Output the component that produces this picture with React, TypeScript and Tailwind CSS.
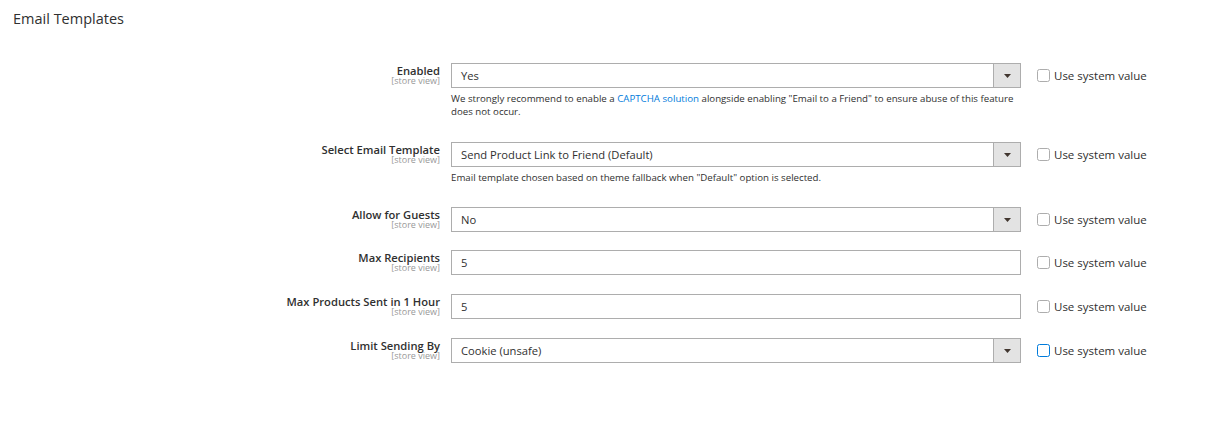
import React from "react";

type Row = {
  label: string;
  kind: "select" | "input";
  value: string;
  note?: React.ReactNode;
  focused?: boolean;
  pb: string;
};

const rows: Row[] = [
  {
    label: "Enabled",
    kind: "select",
    value: "Yes",
    pb: "pb-[20px]",
    note: (
      <>
        We strongly recommend to enable a{" "}
        <span className="text-[#007bdb]">CAPTCHA solution</span> alongside enabling
        "Email to a Friend" to ensure abuse of this feature does not occur.
      </>
    ),
  },
  {
    label: "Select Email Template",
    kind: "select",
    value: "Send Product Link to Friend (Default)",
    pb: "pb-[19px]",
    note: <>Email template chosen based on theme fallback when "Default" option is selected.</>,
  },
  { label: "Allow for Guests", kind: "select", value: "No", pb: "pb-[18px]" },
  { label: "Max Recipients", kind: "input", value: "5", pb: "pb-[19px]" },
  { label: "Max Products Sent in 1 Hour", kind: "input", value: "5", pb: "pb-[19px]" },
  {
    label: "Limit Sending By",
    kind: "select",
    value: "Cookie (unsafe)",
    focused: true,
    pb: "pb-[19px]",
  },
];

function Field({ row }: { row: Row }) {
  return (
    <div className="flex h-[25px] w-[570px] border border-[#adadad] bg-white">
      <div className="flex flex-1 items-center pl-[9px] pt-[1px] text-[11.2px] text-[#303030]">
        {row.value}
      </div>
      {row.kind === "select" && (
        <div className="flex w-[27px] items-center justify-center border-l border-[#adadad] bg-[#e3e3e3]">
          <svg width="7" height="4" viewBox="0 0 7 4">
            <path d="M0 0 L7 0 L3.5 4 Z" fill="#41362f" />
          </svg>
        </div>
      )}
    </div>
  );
}

function Checkbox({ focused }: { focused?: boolean }) {
  return (
    <svg width="13" height="13" viewBox="0 0 13 13" className="shrink-0">
      <rect
        x="0.5"
        y="0.5"
        width="12"
        height="12"
        rx="2"
        fill="#ffffff"
        stroke={focused ? "#007bdb" : "#adadad"}
        strokeWidth="1"
      />
    </svg>
  );
}

export default function App() {
  return (
    <div
      className="min-h-[425px] w-[1232px] bg-white text-[#303030]"
      style={{ fontFamily: "'Open Sans', 'Noto Sans', sans-serif" }}
    >
      <div className="pl-[13px] pt-[9px] text-[14.5px] leading-[20px] text-[#303030]">
        Email Templates
      </div>
      <div className="mt-[34px] flex flex-col">
        {rows.map((row) => (
          <div key={row.label} className={"flex items-start " + row.pb}>
            <div className="flex w-[440px] flex-col items-end pt-[1px]">
              <div className="text-[11.2px] font-semibold leading-[14px] text-[#303030]">
                {row.label}
              </div>
              <div className="mt-[-2px] text-[9px] leading-[9px] text-[#999999]">
                [store view]
              </div>
            </div>
            <div className="ml-[11px] flex w-[570px] flex-col">
              <Field row={row} />
              {row.note && (
                <div className="mb-[4px] mt-[4px] text-[9.7px] leading-[13px] text-[#303030]">
                  {row.note}
                </div>
              )}
            </div>
            <label className="ml-[16px] flex h-[25px] items-center gap-[4px]">
              <Checkbox focused={row.focused} />
              <span className="text-[11.5px] text-[#303030]">Use system value</span>
            </label>
          </div>
        ))}
      </div>
    </div>
  );
}
